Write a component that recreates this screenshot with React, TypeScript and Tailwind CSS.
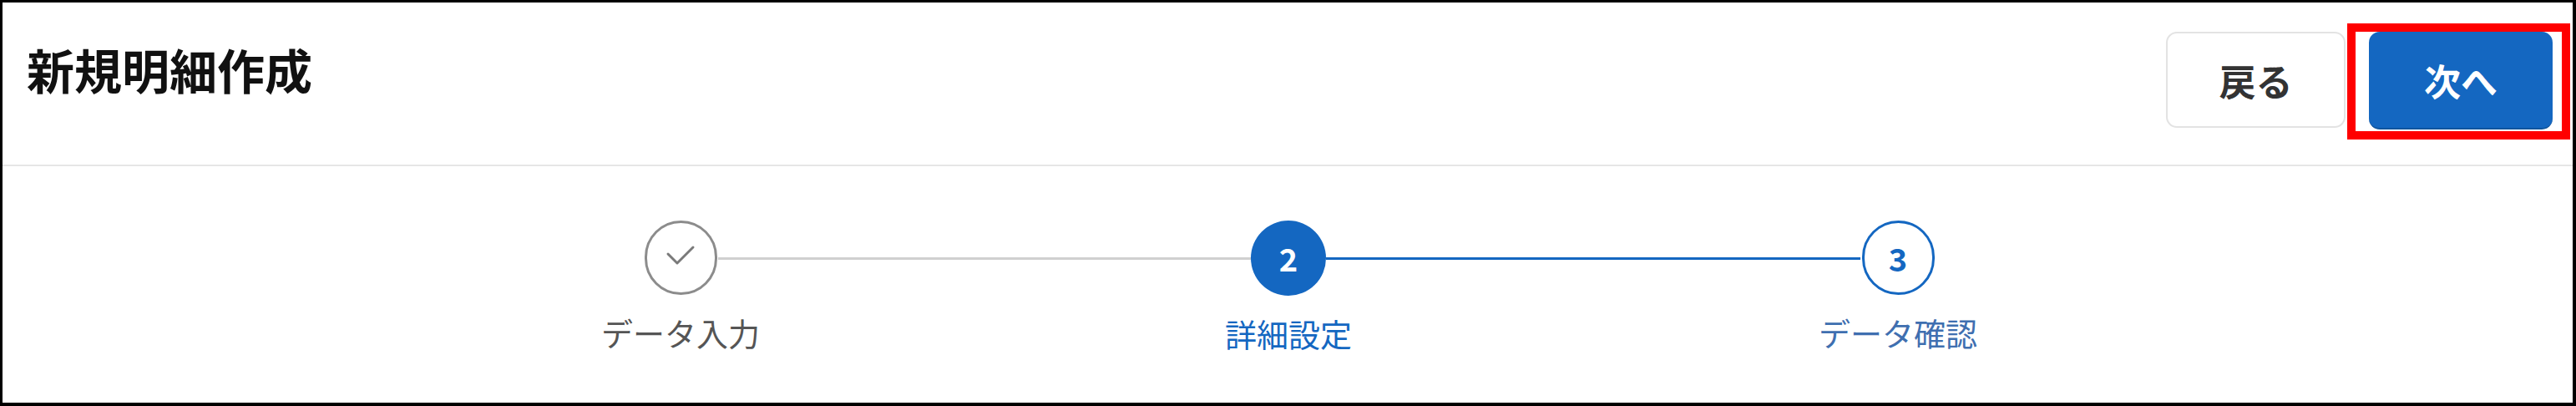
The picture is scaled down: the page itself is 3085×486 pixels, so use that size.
import React from "react"

type StepState = "done" | "current" | "todo"

interface Step {
    label: string
    state: StepState
}

const steps: Step[] = [
    { label: "データ入力", state: "done" },
    { label: "詳細設定", state: "current" },
    { label: "データ確認", state: "todo" },
]

const StepCircle = ({ index, state }: { index: number; state: StepState }) => {
    if (state === "done") {
        return (
            <div className="flex h-[89px] w-[87px] items-center justify-center rounded-full border-[3px] border-[#8c8c8c] bg-white">
                <svg width="36" height="28" viewBox="0 0 36 28" fill="none" className="mb-[6px]">
                    <polyline
                        points="3,12 14,23 33,4"
                        stroke="#7a7a7a"
                        strokeWidth="3"
                        strokeLinecap="round"
                        strokeLinejoin="round"
                    />
                </svg>
            </div>
        )
    }
    if (state === "current") {
        return (
            <div className="flex h-[90px] w-[90px] items-center justify-center rounded-full bg-[#1467c1] text-[38px] font-bold leading-none text-white">
                {index}
            </div>
        )
    }
    return (
        <div className="flex h-[89px] w-[87px] items-center justify-center rounded-full border-[3px] border-[#1467c1] bg-white text-[38px] font-bold leading-none text-[#1467c1]">
            {index}
        </div>
    )
}

// the line leaving the current step is blue, the rest stay grey
const Connector = ({ active }: { active: boolean }) => (
    <div className={active ? "mt-[44px] h-[3px] w-[640px] bg-[#1467c1]" : "mt-[44px] h-[3px] w-[638px] bg-[#d0d0d0]"} />
)

const labelColor: Record<StepState, string> = {
    done: "text-[#555555]",
    current: "text-[#1467c1]",
    todo: "text-[#3f6fb0]",
}

export default function App() {
    return (
        <div
            className="flex h-[486px] w-[3085px] flex-col border-t-[3px] border-l-[3px] border-r-[4px] border-b-[4px] border-black bg-white"
            style={{ fontFamily: '"Noto Sans CJK JP", "Noto Sans", sans-serif' }}
        >
            {/* header */}
            <div className="flex h-[196px] shrink-0 items-start justify-between border-b-2 border-[#e6e6e6] pl-[29px] pr-[24px] pt-[35px]">
                <h1 className="mt-[16px] text-[57px] font-bold leading-none text-[#111111]">新規明細作成</h1>
                <div className="flex items-start gap-[28px]">
                    <button className="flex h-[115px] w-[215px] items-center justify-center rounded-[13px] border-2 border-[#e3e3e3] bg-white text-[44px] font-bold text-[#333333]">
                        戻る
                    </button>
                    <div className="relative">
                        <button className="flex h-[117px] w-[220px] items-center justify-center rounded-[13px] border-b-2 border-[#0f559f] bg-[#1467c1] text-[44px] font-bold text-white">
                            次へ
                        </button>
                        <div className="pointer-events-none absolute -bottom-[12px] -left-[26px] -right-[21px] -top-[10px] border-[10px] border-[#ff0000]" />
                    </div>
                </div>
            </div>

            {/* stepper */}
            <div className="flex flex-1 items-start justify-center pl-[4px] pt-[65px]">
                {steps.map((step, i) => (
                    <React.Fragment key={step.label}>
                        {i > 0 && <Connector active={steps[i - 1].state === "current"} />}
                        <div className="flex w-[90px] flex-col items-center">
                            <StepCircle index={i + 1} state={step.state} />
                            <div className={`mt-[26px] whitespace-nowrap text-[38px] leading-none ${labelColor[step.state]}`}>
                                {step.label}
                            </div>
                        </div>
                    </React.Fragment>
                ))}
            </div>
        </div>
    )
}
